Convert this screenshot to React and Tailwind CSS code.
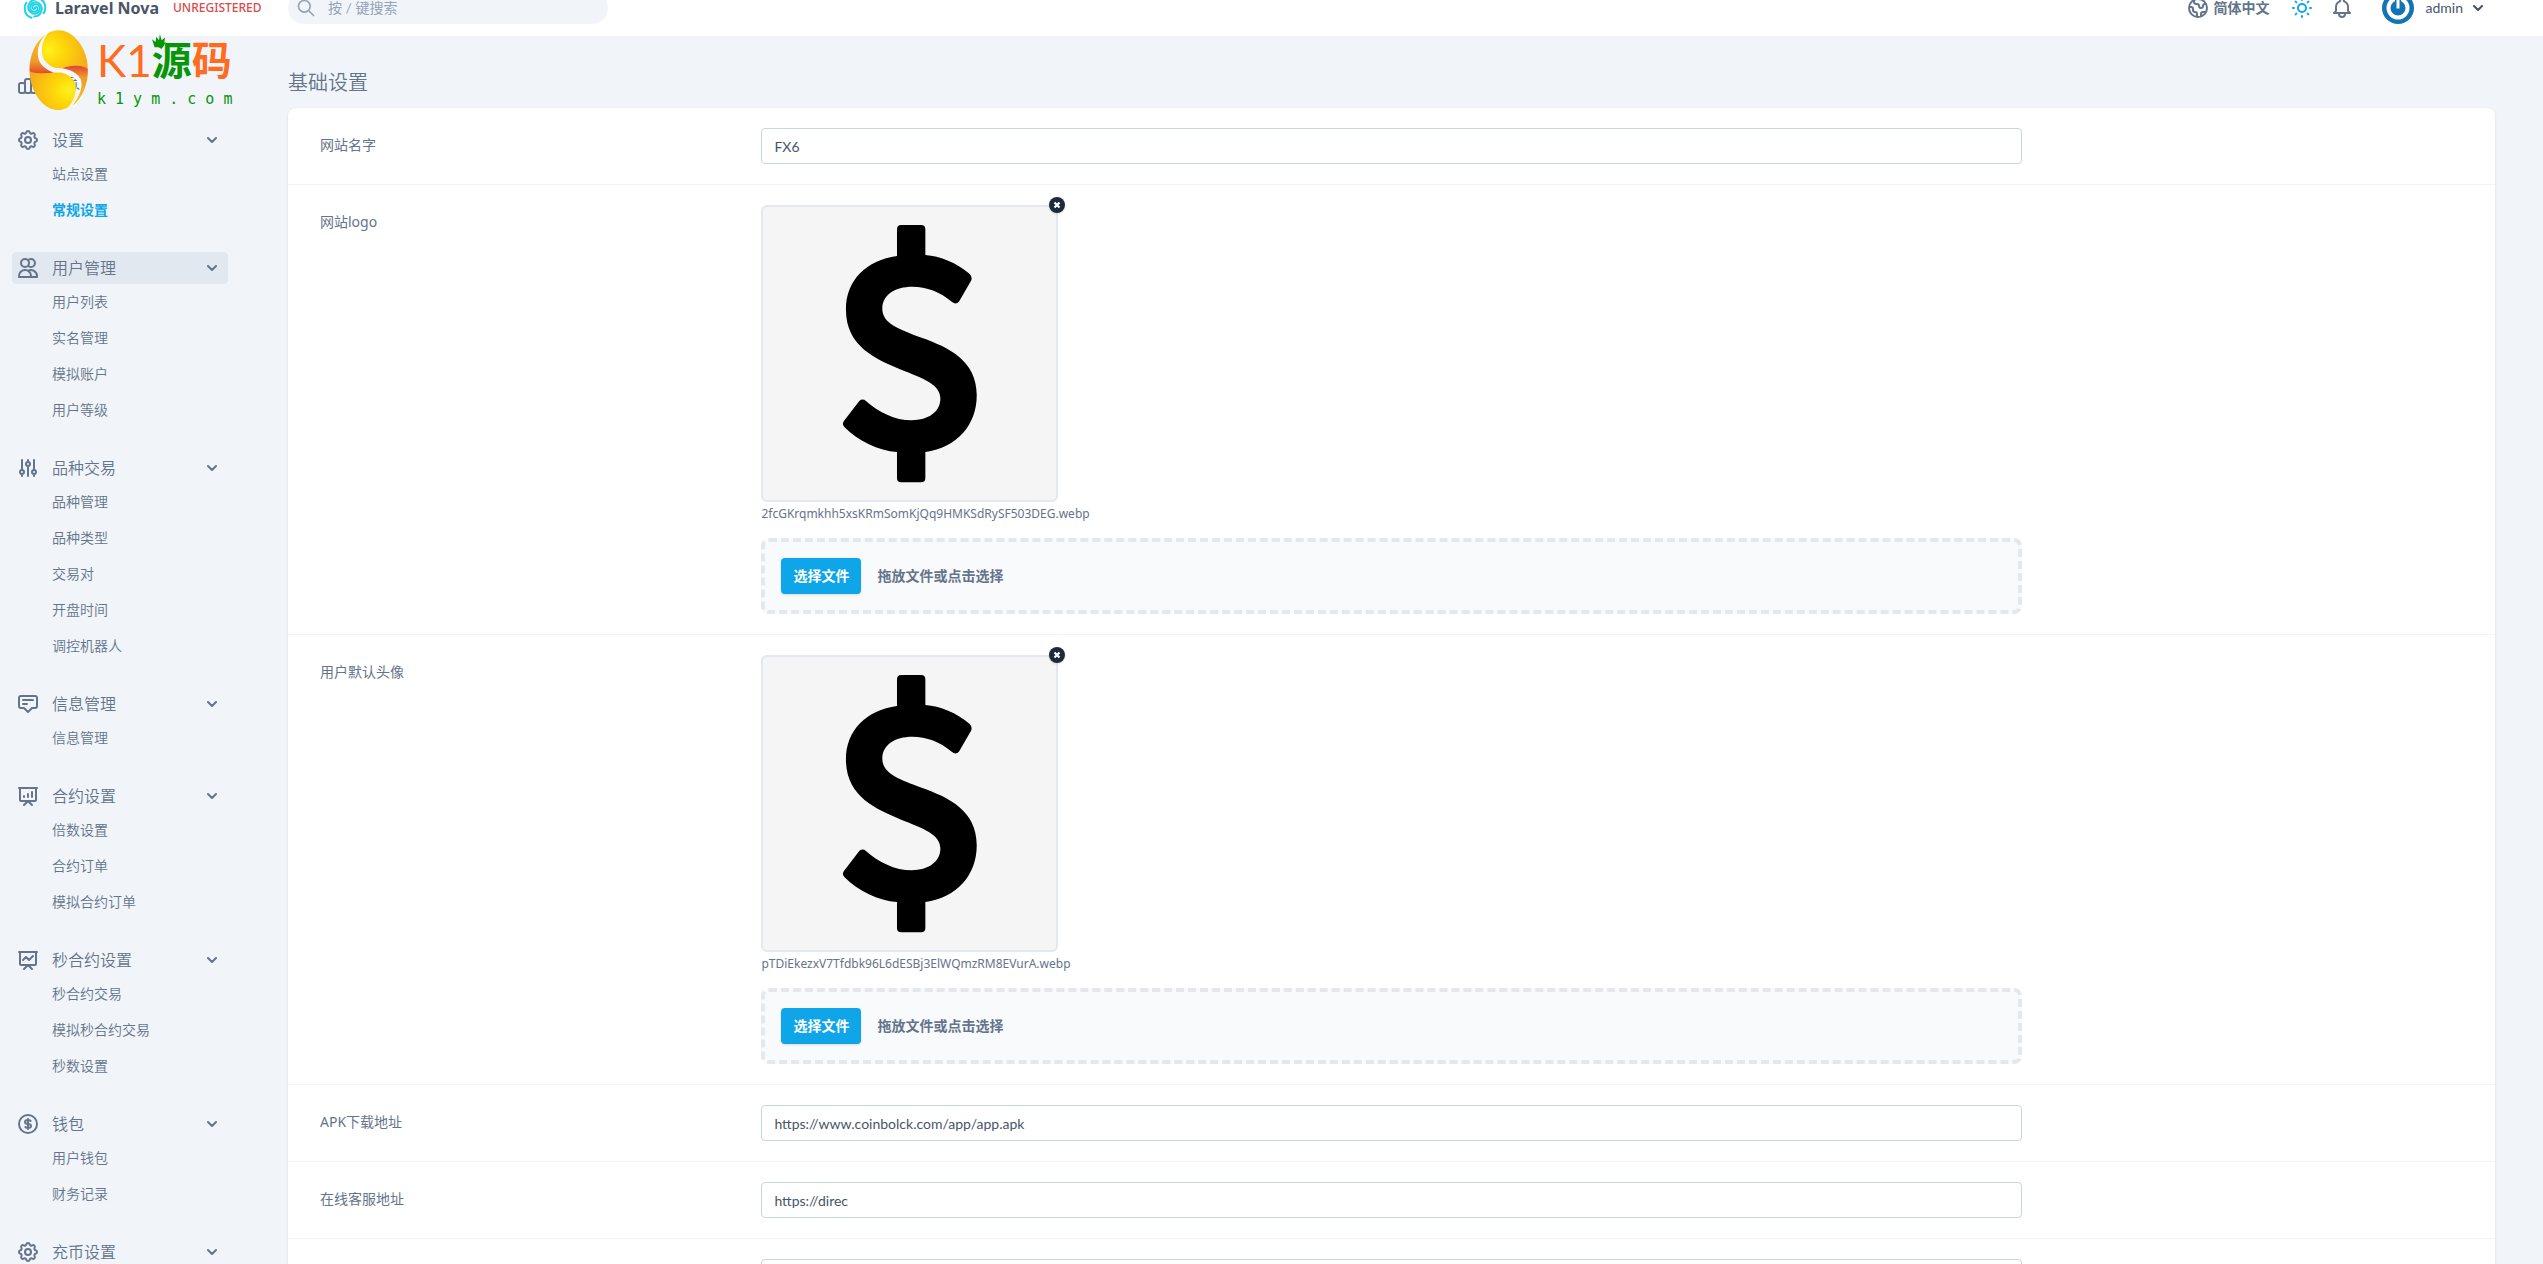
import {
  HiOutlineAdjustments,
  HiOutlineAnnotation,
  HiOutlineBell,
  HiOutlineChartBar,
  HiOutlineCog,
  HiOutlineCurrencyDollar,
  HiOutlineGlobe,
  HiOutlinePresentationChartBar,
  HiOutlinePresentationChartLine,
  HiOutlineSearch,
  HiOutlineSun,
  HiOutlineUsers,
} from 'react-icons/hi';

const menu = [
  { title: '设置', icon: HiOutlineCog, items: ['站点设置', '常规设置'], current: '常规设置' },
  { title: '用户管理', icon: HiOutlineUsers, items: ['用户列表', '实名管理', '模拟账户', '用户等级'], highlighted: true },
  { title: '品种交易', icon: HiOutlineAdjustments, items: ['品种管理', '品种类型', '交易对', '开盘时间', '调控机器人'] },
  { title: '信息管理', icon: HiOutlineAnnotation, items: ['信息管理'] },
  { title: '合约设置', icon: HiOutlinePresentationChartBar, items: ['倍数设置', '合约订单', '模拟合约订单'] },
  { title: '秒合约设置', icon: HiOutlinePresentationChartLine, items: ['秒合约交易', '模拟秒合约交易', '秒数设置'] },
  { title: '钱包', icon: HiOutlineCurrencyDollar, items: ['用户钱包', '财务记录'] },
  { title: '充币设置', icon: HiOutlineCog, items: [] },
];

function Chevron({ className = '' }) {
  return (
    <svg viewBox="0 0 10 6" className={`h-[6px] w-[10px] shrink-0 ${className}`} fill="none" stroke="currentColor" strokeWidth="2" strokeLinecap="round" strokeLinejoin="round" aria-hidden="true">
      <path d="M1 1l4 4 4-4" />
    </svg>
  );
}

function NovaMark() {
  return (
    <svg viewBox="0 0 24 24" className="h-6 w-6 shrink-0" fill="none" stroke="#22d3e6" strokeLinecap="round" aria-hidden="true">
      <g strokeWidth="2">
        <path d="M12 12c.3-1.300 2.100-1.200 2.500.2.6 2-1 3.600-3 3.600-2.800 0-4.700-2.300-4.300-5C7.700 7.600 10.600 5.700 13.600 6.300c3.700.7 5.800 4.300 4.900 8.100-.8 3.200-3.500 5.800-7.300 6.200" />
        <path d="M12 12c-.3 1.300-2.100 1.200-2.500-.2-.6-2 1-3.600 3-3.600 2.800 0 4.700 2.300 4.300 5-.5 3.200-3.400 5.100-6.400 4.500-3.700-.7-5.800-4.300-4.900-8.100.8-3.200 3.500-5.800 7.300-6.200" />
        <path d="M15.500 2.200c4 1.500 6.800 5.200 6.800 9.600 0 2-.6 3.800-1.600 5.300" />
        <path d="M8.500 21.800c-4-1.500-6.800-5.200-6.800-9.600 0-2 .6-3.800 1.600-5.300" />
      </g>
    </svg>
  );
}

function Avatar() {
  return (
    <svg viewBox="0 0 32 32" className="h-8 w-8 shrink-0" aria-hidden="true">
      <circle cx="16" cy="16" r="16" fill="#1274b5" />
      <circle cx="16" cy="16" r="9.500" fill="none" stroke="#fff" strokeWidth="4" />
      <path d="M13 3.500h6v8h-6z" fill="#1274b5" />
      <path d="M14.500 6h3v10.500h-3z" fill="#fff" />
    </svg>
  );
}

function Dollar() {
  return (
    <svg viewBox="70 81 877 878" className="block h-full w-full" role="img" aria-label="$">
      <path d="M471 228C380 240 318 300 318 388C318 500 410 537 480 567C550 595 601 612 601 655C601 695 565 720 515 720C465 720 415 695 378 662Q368 654 358 662L312 722Q305 732 314 741C355 782 415 812 471 815V893Q471 906 484 906H543Q556 906 556 893V815C650 802 710 735 710 645C710 540 625 502 545 473C475 446 427 430 427 385C427 345 465 320 517 320C560 320 600 335 636 366Q648 375 657 364L693 302Q698 292 689 282C650 248 600 228 556 225V148Q556 135 543 135H484Q471 135 471 148Z" />
    </svg>
  );
}

function Egg() {
  return (
    <svg viewBox="60 88 180 244" className="h-[81px] w-[60px] shrink-0" aria-hidden="true">
      <defs>
        <radialGradient id="yolkTop" cx="0.15" cy="0.5" r="0.95">
          <stop offset="0" stopColor="#fff21a" />
          <stop offset="0.4" stopColor="#fdd309" />
          <stop offset="1" stopColor="#f3a61c" />
        </radialGradient>
        <radialGradient id="yolkBottom" cx="0.85" cy="0.5" r="0.95">
          <stop offset="0" stopColor="#fff21a" />
          <stop offset="0.4" stopColor="#fdd309" />
          <stop offset="1" stopColor="#f3a61c" />
        </radialGradient>
        <linearGradient id="rimLeft" x1="0" y1="0" x2="0" y2="1">
          <stop offset="0" stopColor="#fbc814" />
          <stop offset="0.7" stopColor="#ef9a2a" />
          <stop offset="1" stopColor="#e0452b" />
        </linearGradient>
        <linearGradient id="rimRight" x1="0" y1="0" x2="0" y2="1">
          <stop offset="0" stopColor="#e0452b" />
          <stop offset="0.3" stopColor="#ef9a2a" />
          <stop offset="1" stopColor="#fbc814" />
        </linearGradient>
      </defs>
      <path d="M120 97C78 135 78 195 118 212C165 218 195 215 212 240C226 262 214 292 190 318" fill="none" stroke="#f8fafc" strokeWidth="12" />
      <path d="M118 97C140 84 168 86 190 104C220 128 237 165 237 208C222 190 190 192 160 203C128 206 105 186 99 160C96 135 104 112 118 97Z" fill="url(#yolkTop)" />
      <path d="M116 98C80 118 60 165 61 212C80 226 115 220 135 216C105 206 86 188 86 158C86 132 98 112 116 98Z" fill="url(#rimLeft)" />
      <path d="M61 212C85 224 130 214 155 216C190 222 204 248 200 272C198 292 188 312 175 322C155 332 132 332 112 318C82 296 63 258 61 212Z" fill="url(#yolkBottom)" />
      <path d="M160 203C190 192 222 192 237 206C238 250 220 295 190 317C212 288 224 258 215 235C206 218 186 208 160 203Z" fill="url(#rimRight)" />
    </svg>
  );
}

function Watermark() {
  return (
    <div className="pointer-events-none absolute left-[29px] top-[30px] z-10 flex h-[81px] items-start gap-2">
      <Egg />
      <div className="whitespace-nowrap font-['Lato','Noto_Sans_CJK_SC',sans-serif]">
        <div className="flex h-[60px] items-center text-[#ff6b1f]">
          <span className="text-[44px] leading-[60px]">K1</span>
          <span className="relative text-[40px] font-bold leading-[60px] text-[#089508]">
            源
            <svg viewBox="0 0 16 16" className="absolute left-0 top-[4px] h-[14px] w-[14px]" fill="#089508" aria-hidden="true">
              <path d="M3 15L0 6l4 3 1-6 3 4 1-7 2 7 4-3-1 6 2-1-4 6z" />
            </svg>
          </span>
          <span className="text-[40px] font-bold leading-[60px]">码</span>
        </div>
        <div className="font-['DejaVu_Sans_Mono',monospace] text-[15px] leading-[18px] text-[#089508]">k 1 y m . c o m</div>
      </div>
    </div>
  );
}

function Header() {
  return (
    <header className="flex h-9 items-end overflow-hidden bg-white">
      <div className="flex h-14 w-full shrink-0 items-center text-[#64748b]">
        <div className="flex w-72 shrink-0 items-center pl-[23px]">
          <a href="#home" className="flex items-center gap-2">
            <NovaMark />
            <span className="font-['Noto_Sans',sans-serif] text-base font-bold leading-4 text-[#475569]">Laravel Nova</span>
          </a>
          <a href="#license" className="ml-3.5 font-['Noto_Sans',sans-serif] text-xs font-medium leading-4 text-[#d84b4b]">UNREGISTERED</a>
        </div>
        <label className="flex h-8 w-80 items-center gap-3 rounded-full bg-[#f1f5f9] pl-2">
          <HiOutlineSearch className="h-5 w-5 shrink-0 text-[#94a3b8]" />
          <input type="search" aria-label="搜索" placeholder="按 / 键搜索" className="w-full bg-transparent pr-4 text-sm outline-none placeholder:text-[#94a3b8]" />
        </label>
        <div className="ml-auto flex items-center pr-[60px]">
          <button type="button" className="flex items-center gap-1 text-sm font-bold leading-4">
            <HiOutlineGlobe className="h-6 w-6" />
            简体中文
          </button>
          <button type="button" aria-label="主题" className="ml-5 text-[#0ea5e9]">
            <HiOutlineSun className="h-6 w-6" />
          </button>
          <button type="button" aria-label="通知" className="ml-4">
            <HiOutlineBell className="h-6 w-6" />
          </button>
          <button type="button" className="ml-7 flex items-center text-sm leading-4 text-[#475569]">
            <Avatar />
            <span className="ml-3">admin</span>
            <Chevron className="ml-2.5" />
          </button>
        </div>
      </div>
    </header>
  );
}

function Sidebar() {
  return (
    <nav className="flex w-60 shrink-0 flex-col gap-6 px-3 pt-8 font-[350] text-[#64748b]">
      <a href="#dashboard" className="flex h-8 items-center px-1 text-base">
        <HiOutlineChartBar className="h-6 w-6" />
        <span className="ml-3">首页</span>
      </a>
      {menu.map(({ title, icon: Icon, items, current, highlighted }) => (
        <section key={title} className="w-[216px]">
          <button type="button" className={`flex h-8 w-full items-center rounded px-1 text-base ${highlighted ? 'bg-[#e2e8f0]' : ''}`}>
            <Icon className="h-6 w-6" />
            <span className="ml-3">{title}</span>
            <Chevron className="ml-auto mr-[7px]" />
          </button>
          {items.length > 0 && (
            <ul className="pl-10 text-sm">
              {items.map((item) => (
                <li key={item} className="flex h-9 items-center">
                  <a href={`#${item}`} className={item === current ? 'font-bold text-[#0ea5e9]' : ''}>
                    {item}
                  </a>
                </li>
              ))}
            </ul>
          )}
        </section>
      ))}
    </nav>
  );
}

function Row({ label, id, children }) {
  return (
    <div className="flex border-b border-[#f3f4f6]">
      <div className="w-1/5 px-8 py-5">
        <label htmlFor={id} className="block pt-[7px] font-['Noto_Sans','Noto_Sans_CJK_SC',sans-serif] text-sm leading-5 text-[#64748b]">{label}</label>
      </div>
      <div className="w-3/5 px-8 py-5">{children}</div>
    </div>
  );
}

function TextRow({ label, id, value }) {
  return (
    <Row label={label} id={id}>
      <input id={id} type="text" aria-label={label || '地址'} defaultValue={value} className="block h-9 w-full rounded border border-[#cbd5e1] bg-white px-3 text-sm text-[#475569] outline-none" />
    </Row>
  );
}

function FileRow({ label, id, file }) {
  return (
    <Row label={label} id={id}>
      <div className="flex flex-col gap-4">
        <div className="w-[297px]">
          <div className="relative h-[297px] rounded-md border-2 border-[#e2e8f0] bg-[#f5f5f5]">
            <Dollar />
            <button type="button" aria-label="删除" className="absolute -right-[9px] -top-2.5 flex h-4 w-4 items-center justify-center rounded-full bg-[#1e293b] text-white shadow">
              <svg viewBox="0 0 8 8" className="h-2 w-2" stroke="currentColor" strokeWidth="2.200" aria-hidden="true">
                <path d="M1.500 1.500l5 5M6.500 1.500l-5 5" />
              </svg>
            </button>
          </div>
          <p className="mt-1 whitespace-nowrap font-['Noto_Sans',sans-serif] text-xs text-[#64748b]">{file}</p>
        </div>
        <div className="flex items-center gap-4 rounded-lg border-4 border-dashed border-[#e5e7eb] bg-[#f8fafc] p-4 text-sm font-bold">
          <button id={id} type="button" className="h-9 rounded bg-[#0ea5e9] px-3 text-white shadow">选择文件</button>
          <p className="text-[#64748b]">拖放文件或点击选择</p>
        </div>
      </div>
    </Row>
  );
}

export default function App() {
  return (
    <div className="relative h-screen overflow-hidden bg-[#f1f5f9] font-['Lato','Noto_Sans_CJK_SC',sans-serif]">
      <Header />
      <div className="flex">
        <Sidebar />
        <main className="min-w-0 flex-1 px-12 pt-8">
          <h1 className="mb-3 text-xl font-[350] leading-7 text-[#64748b]">基础设置</h1>
          <form className="rounded-lg bg-white shadow">
            <TextRow label="网站名字" id="name" value="FX6" />
            <FileRow label="网站logo" id="logo" file="2fcGKrqmkhh5xsKRmSomKjQq9HMKSdRySF503DEG.webp" />
            <FileRow label="用户默认头像" id="avatar" file="pTDiEkezxV7Tfdbk96L6dESBj3ElWQmzRM8EVurA.webp" />
            <TextRow label="APK下载地址" id="apk" value="https://www.coinbolck.com/app/app.apk" />
            <TextRow label="在线客服地址" id="service" value="https://direc" />
            <TextRow label="" id="extra" value="" />
          </form>
        </main>
      </div>
      <Watermark />
    </div>
  );
}
